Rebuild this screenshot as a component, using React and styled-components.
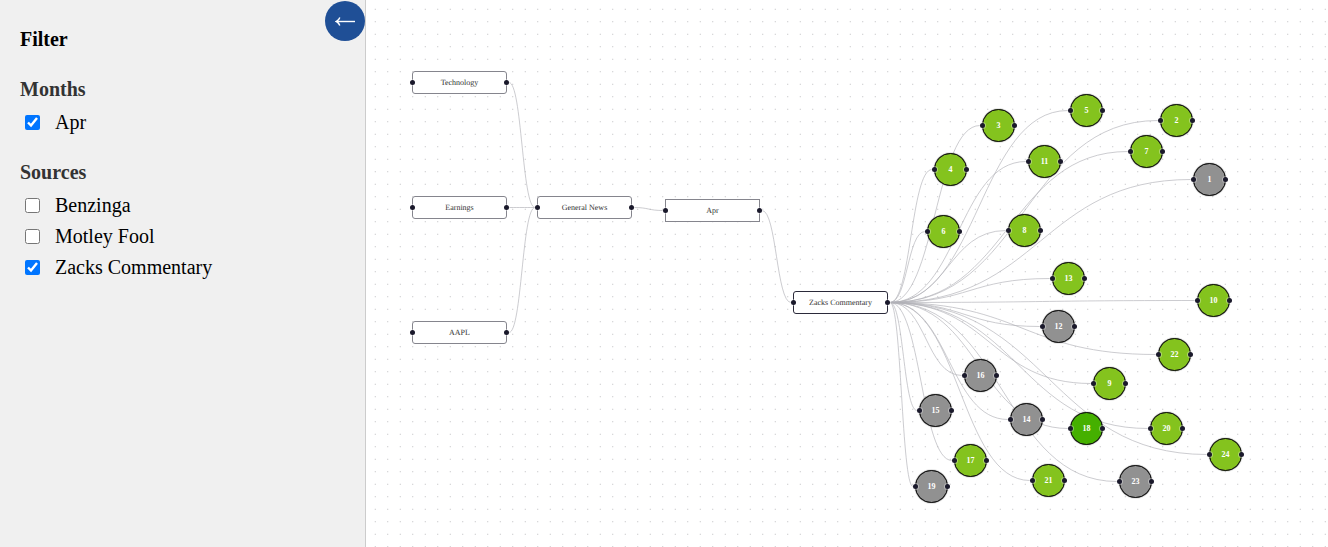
import React, { useState } from 'react';
import styled, { createGlobalStyle } from 'styled-components';

const GlobalStyle = createGlobalStyle`
  * { box-sizing: border-box; }
  body {
    margin: 0;
    background: #fff;
    font-family: "Liberation Serif", "Times New Roman", serif;
  }
`;

const Page = styled.div`
  display: flex;
  min-height: 100vh;
`;

const Sidebar = styled.aside`
  position: relative;
  flex: 0 0 366px;
  padding: 27px 20px;
  background: #f0f0f0;
  border-right: 1px solid #ccc;
  font-size: 20px;
  line-height: 24px;
`;

const CollapseButton = styled.button`
  position: absolute;
  top: 1px;
  right: 0;
  display: flex;
  align-items: center;
  justify-content: center;
  width: 40px;
  height: 40px;
  padding: 0;
  border: 0;
  border-radius: 50%;
  background: #1f4f96;
  color: #fff;
  cursor: pointer;
`;

const Title = styled.h1`
  margin: 0;
  font-size: 20px;
  line-height: 24px;
`;

const Group = styled.fieldset`
  display: flex;
  flex-direction: column;
  gap: 7px;
  margin: 26px 0 0;
  padding: 0;
  border: 0;
`;

const Legend = styled.legend`
  padding: 0;
  margin-bottom: 9px;
  color: #333;
  font-weight: bold;
`;

const Option = styled.label`
  display: flex;
  align-items: center;
  gap: 15px;
  padding-left: 5px;
`;

const Checkbox = styled.input`
  width: 15px;
  height: 15px;
  margin: 0;
`;

const Canvas = styled.main`
  position: relative;
  flex: 1;
  min-width: 0;
  overflow: hidden;
`;

const Drawing = styled.svg`
  position: absolute;
  inset: 0;
  width: 100%;
  height: 100%;
`;

const Node = styled.div`
  position: absolute;
  left: ${(p) => p.$x}px;
  top: ${(p) => p.$y}px;
  display: flex;
  align-items: center;
  justify-content: center;
  font-size: 8px;
`;

const TopicNode = styled(Node)`
  width: 95px;
  height: 23px;
  border: 1px solid ${(p) => (p.$selected ? '#2b2a3a' : '#85858d')};
  border-radius: ${(p) => (p.$square ? 0 : 3)}px;
  background: #fff;
  color: #333;
  text-rendering: geometricPrecision;
`;

const tones = { lime: '#84c31e', green: '#45b000', gray: '#919191' };

const ArticleNode = styled(Node)`
  width: 33px;
  height: 33px;
  border: 1px solid #111;
  border-radius: 50%;
  background: ${(p) => tones[p.$tone]};
  box-shadow: 0 0 1px #111;
  color: #fff;
  font-weight: bold;
`;

const Handle = styled.span`
  position: absolute;
  top: calc(50% - 2.5px);
  ${(p) => p.$side}: -3px;
  width: 5px;
  height: 5px;
  border-radius: 50%;
  background: #1a192b;
  box-shadow: 0 0 0 1px rgba(255, 255, 255, 0.35);
`;

const topics = [
  { id: 'technology', label: 'Technology', x: 46, y: 71 },
  { id: 'earnings', label: 'Earnings', x: 46, y: 196 },
  { id: 'aapl', label: 'AAPL', x: 46, y: 321 },
  { id: 'general', label: 'General News', x: 171, y: 196 },
  { id: 'apr', label: 'Apr', x: 299, y: 199, square: true },
  { id: 'zacks', label: 'Zacks Commentary', x: 427, y: 291, selected: true },
];

const topicLinks = [
  ['technology', 'general'],
  ['earnings', 'general'],
  ['aapl', 'general'],
  ['general', 'apr'],
  ['apr', 'zacks'],
];

const articles = [
  [1, 827, 163, 'gray'],
  [2, 794, 104, 'lime'],
  [3, 616, 109, 'lime'],
  [4, 568, 153, 'lime'],
  [5, 704, 94, 'lime'],
  [6, 561, 215, 'lime'],
  [7, 764, 135, 'lime'],
  [8, 642, 214, 'lime'],
  [9, 727, 367, 'lime'],
  [10, 831, 284, 'lime'],
  [11, 662, 145, 'lime'],
  [12, 676, 310, 'gray'],
  [13, 686, 262, 'lime'],
  [14, 644, 403, 'gray'],
  [15, 553, 394, 'gray'],
  [16, 598, 359, 'gray'],
  [17, 588, 444, 'lime'],
  [18, 704, 412, 'green'],
  [19, 549, 470, 'gray'],
  [20, 784, 412, 'lime'],
  [21, 666, 464, 'lime'],
  [22, 792, 338, 'lime'],
  [23, 753, 465, 'gray'],
  [24, 843, 438, 'lime'],
];

const curve = (x1, y1, x2, y2) => {
  const mid = (x1 + x2) / 2;
  return `M${x1},${y1} C${mid},${y1} ${mid},${y2} ${x2},${y2}`;
};

const byId = Object.fromEntries(topics.map((t) => [t.id, t]));

function Edges() {
  const hub = byId.zacks;
  return (
    <Drawing aria-hidden="true">
      <defs>
        <pattern
          id="grid-dots"
          width="25"
          height="25"
          patternUnits="userSpaceOnUse"
          patternTransform="translate(3 3) scale(0.5)"
        >
          <circle cx="12.5" cy="12.5" r="1" fill="#a0a0a4" />
        </pattern>
      </defs>
      <rect width="100%" height="100%" fill="url(#grid-dots)" />
      <g fill="none" stroke="#b1b1b7" strokeOpacity="0.65">
        {topicLinks.map(([from, to]) => (
          <path
            key={from}
            d={curve(byId[from].x + 97, byId[from].y + 11.5, byId[to].x - 2, byId[to].y + 11.5)}
          />
        ))}
        {articles.map(([n, x, y]) => (
          <path key={n} d={curve(hub.x + 97, hub.y + 11.5, x - 2, y + 16.5)} />
        ))}
      </g>
    </Drawing>
  );
}

function ArrowLeft() {
  return (
    <svg width="20" height="10" viewBox="0 0 20 10" fill="none" stroke="#fff" aria-hidden="true">
      <path d="M2 5.5H20" strokeWidth="1.4" />
      <path d="M4.8 1.5Q3.8 4.4 1.4 5.5Q3.8 6.6 4.8 9.5" strokeWidth="1.4" />
    </svg>
  );
}

function Handles() {
  return (
    <>
      <Handle $side="left" />
      <Handle $side="right" />
    </>
  );
}

function FilterGroup({ title, options, checked, onToggle }) {
  return (
    <Group>
      <Legend>{title}</Legend>
      {options.map((name) => (
        <Option key={name}>
          <Checkbox type="checkbox" checked={checked.includes(name)} onChange={() => onToggle(name)} />
          {name}
        </Option>
      ))}
    </Group>
  );
}

export default function App() {
  const [checked, setChecked] = useState(['Apr', 'Zacks Commentary']);
  const toggle = (name) =>
    setChecked((list) => (list.includes(name) ? list.filter((n) => n !== name) : [...list, name]));

  return (
    <Page>
      <GlobalStyle />
      <Sidebar>
        <CollapseButton type="button" aria-label="Collapse filters">
          <ArrowLeft />
        </CollapseButton>
        <Title>Filter</Title>
        <FilterGroup title="Months" options={['Apr']} checked={checked} onToggle={toggle} />
        <FilterGroup
          title="Sources"
          options={['Benzinga', 'Motley Fool', 'Zacks Commentary']}
          checked={checked}
          onToggle={toggle}
        />
      </Sidebar>
      <Canvas>
        <Edges />
        {topics.map((t) => (
          <TopicNode key={t.id} $x={t.x} $y={t.y} $square={t.square} $selected={t.selected}>
            {t.label}
            <Handles />
          </TopicNode>
        ))}
        {articles.map(([n, x, y, tone]) => (
          <ArticleNode key={n} $x={x} $y={y} $tone={tone}>
            {n}
            <Handles />
          </ArticleNode>
        ))}
      </Canvas>
    </Page>
  );
}
